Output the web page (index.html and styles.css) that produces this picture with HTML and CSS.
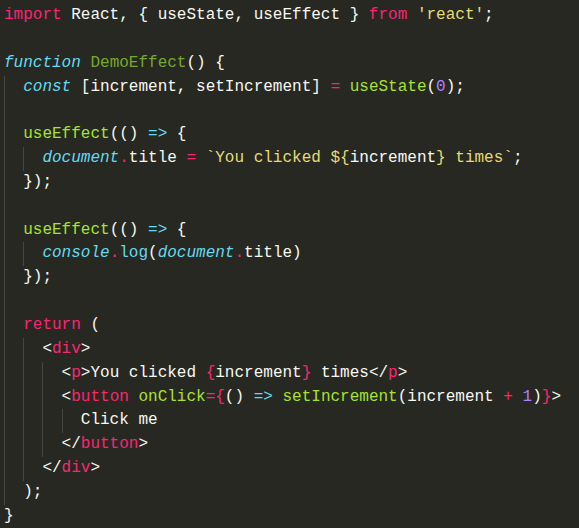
FILE: index.html
```html
<!DOCTYPE html>
<html lang="en">
<head>
<meta charset="utf-8">
<title>DemoEffect</title>
<link rel="stylesheet" href="styles.css">
</head>
<body>
<div class="window">
  <div class="code">
    <div class="ln"><span class="k">import</span> React, { useState, useEffect } <span class="k">from</span> <span class="s">'react'</span>;</div>
    <div class="ln"></div>
    <div class="ln"><span class="t">function</span> <span class="fn">DemoEffect</span>() {</div>
    <div class="ln g1">  <span class="t">const</span> [increment, setIncrement] <span class="k">=</span> <span class="f">useState</span>(<span class="n">0</span>);</div>
    <div class="ln g1"></div>
    <div class="ln g1">  <span class="f">useEffect</span>(() <span class="c">=&gt;</span> {</div>
    <div class="ln g2">    <span class="t">document</span><span class="k">.</span>title <span class="k">=</span> <span class="s">`You clicked ${</span>increment<span class="s">} times`</span>;</div>
    <div class="ln g1">  });</div>
    <div class="ln g1"></div>
    <div class="ln g1">  <span class="f">useEffect</span>(() <span class="c">=&gt;</span> {</div>
    <div class="ln g2">    <span class="t">console</span><span class="k">.</span><span class="c">log</span>(<span class="t">document</span><span class="k">.</span>title)</div>
    <div class="ln g1">  });</div>
    <div class="ln g1"></div>
    <div class="ln g1">  <span class="k">return</span> (</div>
    <div class="ln g2">    &lt;<span class="k">div</span>&gt;</div>
    <div class="ln g3">      &lt;<span class="k">p</span>&gt;You clicked <span class="k">{</span>increment<span class="k">}</span> times&lt;/<span class="k">p</span>&gt;</div>
    <div class="ln g3">      &lt;<span class="k">button</span> <span class="f">onClick</span><span class="k">={</span>() <span class="c">=&gt;</span> <span class="f">setIncrement</span>(increment <span class="k">+</span> <span class="n">1</span>)<span class="k">}</span>&gt;</div>
    <div class="ln g4">        Click me</div>
    <div class="ln g3">      &lt;/<span class="k">button</span>&gt;</div>
    <div class="ln g2">    &lt;/<span class="k">div</span>&gt;</div>
    <div class="ln g1">  );</div>
    <div class="ln">}</div>
  </div>
  <div class="strip"><span class="caret"></span></div>
</div>
</body>
</html>
```

FILE: styles.css
```css
html, body {
  margin: 0;
  padding: 0;
  background: #272822;
}

.window {
  height: 528px;
  display: flex;
  flex-direction: column;
  background: #272822;
  overflow: hidden;
}

.code {
  flex: 1;
  padding: 4px 0 0 4px;
  font-family: "Liberation Mono", "DejaVu Sans Mono", monospace;
  font-size: 16px;
  color: #f8f8f2;
}

.ln {
  height: 23.85px;
  line-height: 23.85px;
  white-space: pre;
  background-repeat: no-repeat;
}

.g1 {
  background-image: linear-gradient(#47473f, #47473f);
  background-size: 1px 100%;
  background-position: 0 0;
}

.g2 {
  background-image: linear-gradient(#47473f, #47473f), linear-gradient(#47473f, #47473f);
  background-size: 1px 100%, 1px 100%;
  background-position: 0 0, 2ch 0;
}

.g3 {
  background-image: linear-gradient(#47473f, #47473f), linear-gradient(#47473f, #47473f), linear-gradient(#47473f, #47473f);
  background-size: 1px 100%, 1px 100%, 1px 100%;
  background-position: 0 0, 2ch 0, 4ch 0;
}

.g4 {
  background-image: linear-gradient(#47473f, #47473f), linear-gradient(#47473f, #47473f), linear-gradient(#47473f, #47473f), linear-gradient(#47473f, #47473f);
  background-size: 1px 100%, 1px 100%, 1px 100%, 1px 100%;
  background-position: 0 0, 2ch 0, 4ch 0, 6ch 0;
}

.k { color: #f92672; }
.t { color: #66d9ef; font-style: italic; }
.c { color: #66d9ef; }
.f { color: #a6e22e; }
.fn { color: #78a82a; }
.s { color: #e6db74; }
.n { color: #ae81ff; }

.strip {
  height: 2px;
  background: #3e3f39;
  display: flex;
}

.caret {
  width: 5px;
  height: 2px;
  background: #d8d8d2;
}
```
